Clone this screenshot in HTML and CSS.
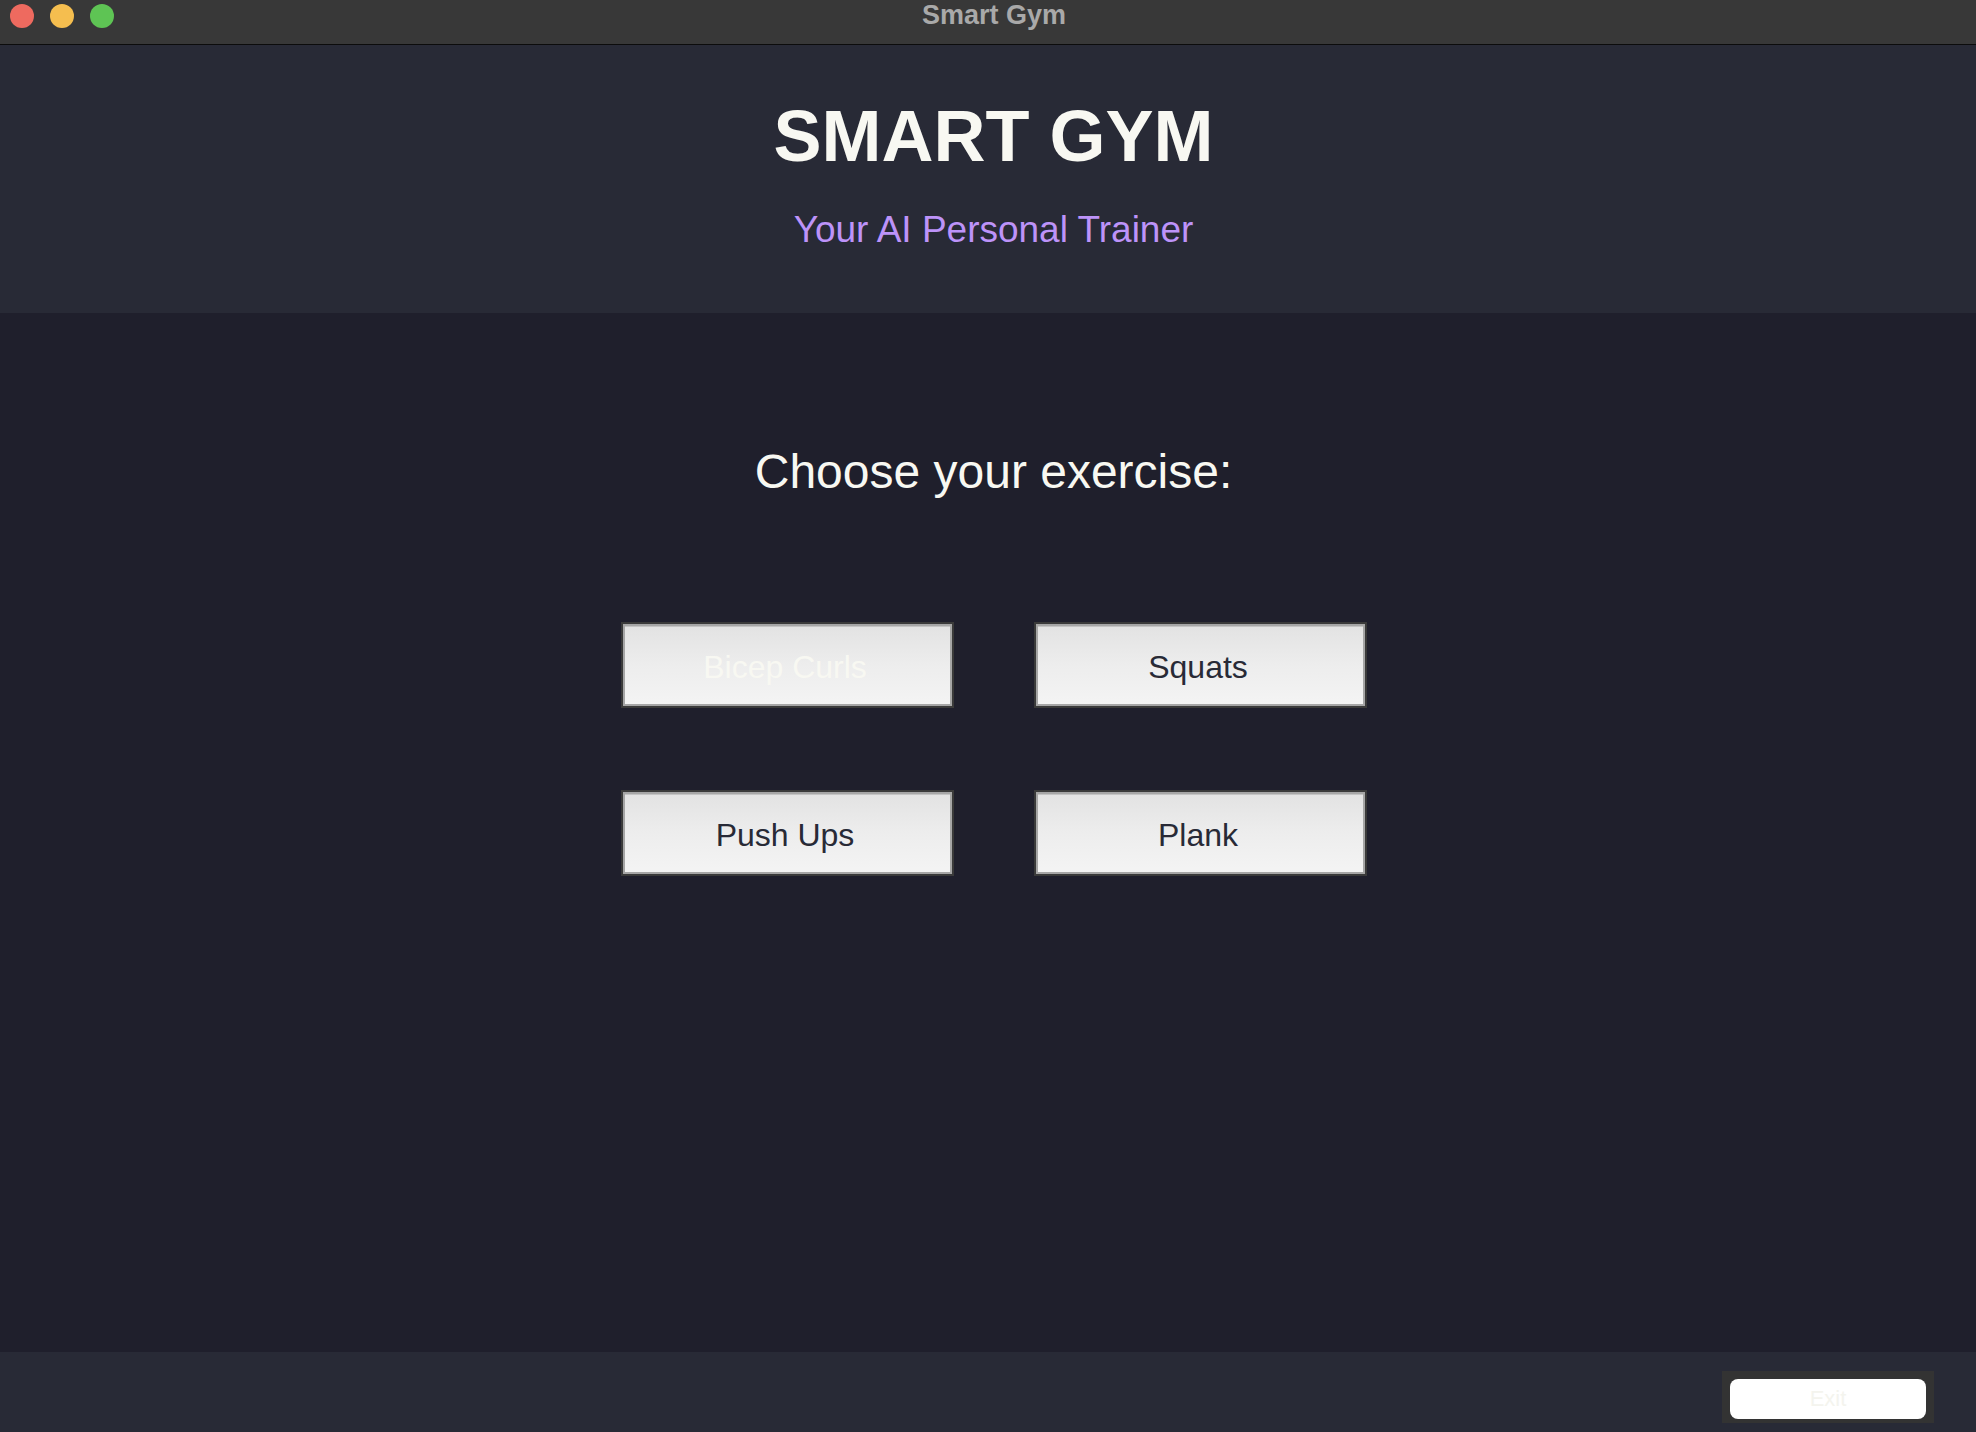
FILE: index.html
```html
<!DOCTYPE html>
<html lang="en">
<head>
<meta charset="utf-8">
<title>Smart Gym</title>
<link rel="stylesheet" href="styles.css">
</head>
<body>
<div class="window">
  <div class="titlebar">
    <div class="lights">
      <span class="light red"></span>
      <span class="light yellow"></span>
      <span class="light green"></span>
    </div>
    <div class="window-title">Smart Gym</div>
  </div>
  <header class="header">
    <h1 class="title">SMART GYM</h1>
    <p class="subtitle">Your AI Personal Trainer</p>
  </header>
  <main class="main">
    <h2 class="prompt">Choose your exercise:</h2>
    <div class="grid">
      <button class="ex-btn ex-btn-faint">Bicep Curls</button>
      <button class="ex-btn">Squats</button>
      <button class="ex-btn">Push Ups</button>
      <button class="ex-btn">Plank</button>
    </div>
  </main>
  <footer class="footer">
    <div class="exit-frame">
      <button class="exit-btn">Exit</button>
    </div>
  </footer>
</div>
</body>
</html>
```

FILE: styles.css
```css
* { box-sizing: border-box; }
html, body {
  margin: 0;
  padding: 0;
  width: 1976px;
  height: 1432px;
  overflow: hidden;
  font-family: "Liberation Sans", Arial, sans-serif;
}
.window {
  display: flex;
  flex-direction: column;
  height: 1432px;
  background: #1f1f2c;
}
.titlebar {
  position: relative;
  height: 45px;
  flex: 0 0 45px;
  background: #383838;
  border-bottom: 1px solid #0c0c0c;
  display: flex;
  align-items: center;
  justify-content: center;
  padding-left: 12px;
}
.lights {
  position: absolute;
  left: 10px;
  top: 4px;
  display: flex;
  gap: 16px;
}
.light {
  width: 24px;
  height: 24px;
  border-radius: 50%;
  display: block;
}
.red { background: #ee6a5f; }
.yellow { background: #f5be4f; }
.green { background: #5ec454; }
.window-title {
  color: #a9a9a9;
  font-weight: bold;
  font-size: 27px;
  line-height: 30px;
  margin-top: -14px;
}
.header {
  flex: 0 0 268px;
  background: #282a36;
  display: flex;
  flex-direction: column;
  align-items: center;
  padding: 55px 0 0 11px;
}
.title {
  margin: 0;
  font-size: 72px;
  line-height: 72px;
  font-weight: bold;
  color: #f8f8f2;
}
.subtitle {
  margin: 40px 0 0;
  font-size: 37px;
  line-height: 36px;
  color: #bd93f9;
}
.main {
  flex: 1 1 auto;
  display: flex;
  flex-direction: column;
  align-items: center;
  padding: 135px 0 0 11px;
}
.prompt {
  margin: 0;
  font-size: 48px;
  line-height: 48px;
  font-weight: normal;
  color: #f8f8f2;
}
.grid {
  margin-top: 126px;
  display: grid;
  grid-template-columns: 333px 333px;
  grid-auto-rows: 86px;
  column-gap: 80px;
  row-gap: 82px;
}
.ex-btn {
  font-family: "Liberation Sans", Arial, sans-serif;
  font-size: 32px;
  color: #282a36;
  border: 2px solid #3a3a3a;
  box-shadow: inset 0 0 0 2px #a6a6a6, inset 0 3px 0 0 #c4c4c4;
  background: linear-gradient(to bottom, #e2e2e2 0%, #ededed 50%, #f4f4f4 100%);
  padding: 4px 4px 0 0;
  margin: 0;
}
.ex-btn-faint { color: #f8f8f2; }
.footer {
  flex: 0 0 80px;
  background: #282a36;
  display: flex;
  justify-content: flex-end;
  align-items: flex-start;
  padding: 19px 42px 0 0;
}
.exit-frame {
  width: 212px;
  height: 52px;
  background: #333333;
  padding: 8px;
}
.exit-btn {
  width: 196px;
  height: 40px;
  border: none;
  border-radius: 8px;
  background: #ffffff;
  color: #f4f4ee;
  font-family: "Liberation Sans", Arial, sans-serif;
  font-size: 22px;
  padding: 0;
  display: block;
}
```
